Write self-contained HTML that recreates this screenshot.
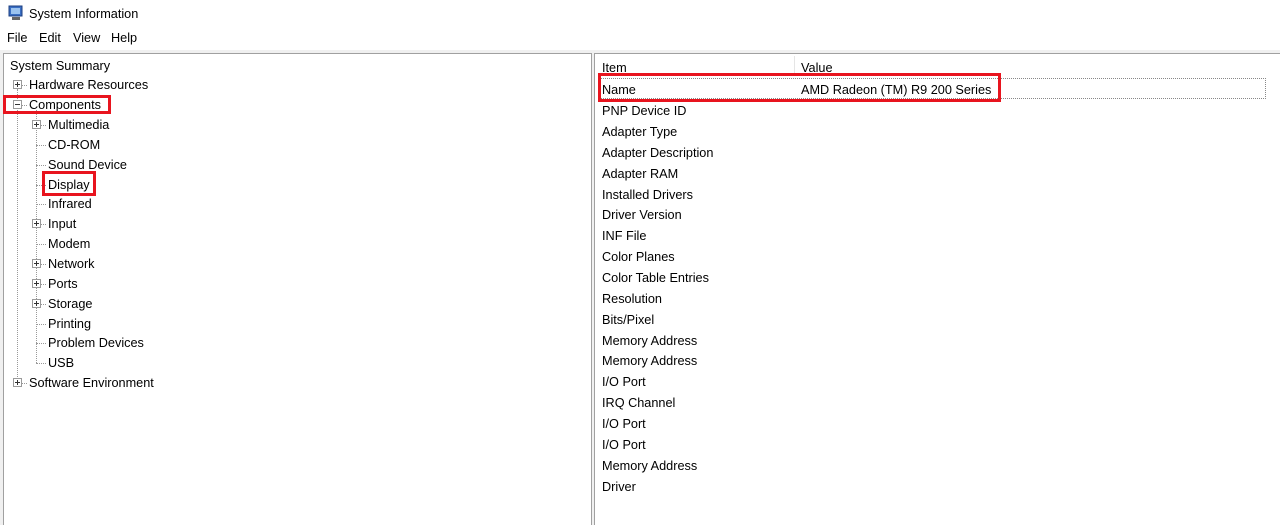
<!DOCTYPE html>
<html><head><style>
html,body{margin:0;height:525px;overflow:hidden}
body{width:1280px;background:#fff;position:relative;font-family:"Liberation Sans",sans-serif;font-size:12.7px;color:#000}
.a{position:absolute;white-space:nowrap;line-height:18px;margin-top:1px}
.pb{position:absolute;width:7px;height:7px;border:1px solid #9a9a9a;background:#fff}
.pb:before{content:"";position:absolute;left:1px;top:3px;width:5px;height:1px;background:#333}
.pb.p:after{content:"";position:absolute;left:3px;top:1px;width:1px;height:5px;background:#333}
.hl{position:absolute;height:0;border-top:1px dotted #999}
.vl{position:absolute;width:0;border-left:1px dotted #999}
.red{position:absolute;border:3px solid #e8141e;box-sizing:border-box}
</style></head><body>
<svg style="position:absolute;left:8px;top:5px" width="16" height="16"><rect x="1" y="1" width="13" height="10" fill="#3a6fc4" stroke="#1d3f80"/><rect x="3" y="3" width="9" height="6" fill="#9cc4f0"/><rect x="4" y="12" width="8" height="3" fill="#666"/></svg>
<div class="a" style="left:29px;top:4px">System Information</div>
<div class="a" style="left:7px;top:28px">File</div>
<div class="a" style="left:39px;top:28px">Edit</div>
<div class="a" style="left:73px;top:28px">View</div>
<div class="a" style="left:111px;top:28px">Help</div>
<div style="position:absolute;left:0;top:50px;width:1280px;height:475px;background:#f0f0f0"></div>
<div style="position:absolute;left:3px;top:53px;width:587px;height:480px;background:#fff;border:1px solid #a0a0a0"></div>
<div style="position:absolute;left:594px;top:53px;width:690px;height:480px;background:#fff;border:1px solid #a0a0a0"></div>

<div class="vl" style="left:17px;top:89px;height:294px"></div>
<div class="vl" style="left:36px;top:110px;height:253px"></div>
<div class="a" style="left:10px;top:56px">System Summary</div>
<div class="hl" style="left:17px;top:85px;width:10px"></div><div class="pb p" style="left:13px;top:80px"></div><div class="a" style="left:29px;top:75px">Hardware Resources</div>
<div class="hl" style="left:17px;top:105px;width:10px"></div><div class="pb" style="left:13px;top:100px"></div><div class="a" style="left:29px;top:95px">Components</div>
<div class="hl" style="left:17px;top:383px;width:10px"></div><div class="pb p" style="left:13px;top:378px"></div><div class="a" style="left:29px;top:373px">Software Environment</div>

<div class="hl" style="left:36px;top:125px;width:10px"></div><div class="pb p" style="left:32px;top:120px"></div><div class="a" style="left:48px;top:115px">Multimedia</div>
<div class="hl" style="left:36px;top:145px;width:10px"></div><div class="a" style="left:48px;top:135px">CD-ROM</div>
<div class="hl" style="left:36px;top:165px;width:10px"></div><div class="a" style="left:48px;top:155px">Sound Device</div>
<div class="hl" style="left:36px;top:185px;width:10px"></div><div class="a" style="left:48px;top:175px">Display</div>
<div class="hl" style="left:36px;top:204px;width:10px"></div><div class="a" style="left:48px;top:194px">Infrared</div>
<div class="hl" style="left:36px;top:224px;width:10px"></div><div class="pb p" style="left:32px;top:219px"></div><div class="a" style="left:48px;top:214px">Input</div>
<div class="hl" style="left:36px;top:244px;width:10px"></div><div class="a" style="left:48px;top:234px">Modem</div>
<div class="hl" style="left:36px;top:264px;width:10px"></div><div class="pb p" style="left:32px;top:259px"></div><div class="a" style="left:48px;top:254px">Network</div>
<div class="hl" style="left:36px;top:284px;width:10px"></div><div class="pb p" style="left:32px;top:279px"></div><div class="a" style="left:48px;top:274px">Ports</div>
<div class="hl" style="left:36px;top:304px;width:10px"></div><div class="pb p" style="left:32px;top:299px"></div><div class="a" style="left:48px;top:294px">Storage</div>
<div class="hl" style="left:36px;top:324px;width:10px"></div><div class="a" style="left:48px;top:314px">Printing</div>
<div class="hl" style="left:36px;top:343px;width:10px"></div><div class="a" style="left:48px;top:333px">Problem Devices</div>
<div class="hl" style="left:36px;top:363px;width:10px"></div><div class="a" style="left:48px;top:353px">USB</div>

<div style="position:absolute;left:794px;top:56px;width:1px;height:20px;background:#e5e5e5"></div>
<div class="a" style="left:602px;top:58px">Item</div>
<div class="a" style="left:801px;top:58px">Value</div>
<div style="position:absolute;left:598px;top:78px;width:668px;height:21px;border:1px dotted #888;box-sizing:border-box"></div>
<div class="a" style="left:602px;top:80px">Name</div>
<div class="a" style="left:801px;top:80px">AMD Radeon (TM) R9 200 Series</div>
<div class="a" style="left:602px;top:101px">PNP Device ID</div>
<div class="a" style="left:602px;top:122px">Adapter Type</div>
<div class="a" style="left:602px;top:143px">Adapter Description</div>
<div class="a" style="left:602px;top:164px">Adapter RAM</div>
<div class="a" style="left:602px;top:185px">Installed Drivers</div>
<div class="a" style="left:602px;top:205px">Driver Version</div>
<div class="a" style="left:602px;top:226px">INF File</div>
<div class="a" style="left:602px;top:247px">Color Planes</div>
<div class="a" style="left:602px;top:268px">Color Table Entries</div>
<div class="a" style="left:602px;top:289px">Resolution</div>
<div class="a" style="left:602px;top:310px">Bits/Pixel</div>
<div class="a" style="left:602px;top:331px">Memory Address</div>
<div class="a" style="left:602px;top:351px">Memory Address</div>
<div class="a" style="left:602px;top:372px">I/O Port</div>
<div class="a" style="left:602px;top:393px">IRQ Channel</div>
<div class="a" style="left:602px;top:414px">I/O Port</div>
<div class="a" style="left:602px;top:435px">I/O Port</div>
<div class="a" style="left:602px;top:456px">Memory Address</div>
<div class="a" style="left:602px;top:477px">Driver</div>

<div class="red" style="left:3px;top:95px;width:108px;height:19px"></div>
<div class="red" style="left:42px;top:171px;width:54px;height:25px"></div>
<div class="red" style="left:598px;top:73px;width:403px;height:29px"></div>
</body></html>
